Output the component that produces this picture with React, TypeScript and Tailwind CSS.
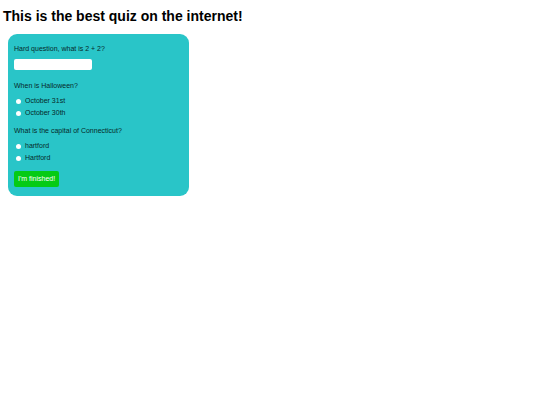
import { useState } from "react";

type ChoiceQuestion = {
  name: string;
  question: string;
  options: string[];
};

const choiceQuestions: ChoiceQuestion[] = [
  {
    name: "halloween",
    question: "When is Halloween?",
    options: ["October 31st", "October 30th"],
  },
  {
    name: "capital",
    question: "What is the capital of Connecticut?",
    options: ["hartford", "Hartford"],
  },
];

export default function App() {
  const [sum, setSum] = useState("");
  const [answers, setAnswers] = useState<Record<string, string>>({});

  return (
    <main className="min-h-screen bg-white font-['Liberation_Sans',Arial,sans-serif] text-black">
      <h1 className="px-[3px] pt-2 text-[14px] leading-4 font-bold">
        This is the best quiz on the internet!
      </h1>

      <form
        onSubmit={(e) => e.preventDefault()}
        className="mx-2 mt-2.5 max-w-[181px] rounded-[9px] bg-[#29c5c8] px-1.5 pt-[9px] pb-[9px] text-[7px] leading-3 text-[#06292a]"
      >
        <label htmlFor="sum" className="block">
          Hard question, what is 2 + 2?
        </label>
        <input
          id="sum"
          type="text"
          value={sum}
          onChange={(e) => setSum(e.target.value)}
          className="mt-1 mb-2.5 block h-[11px] w-[78px] rounded-xs bg-white px-1"
        />

        {choiceQuestions.map((q) => (
          <fieldset key={q.name} className="mb-1.5">
            <legend className="mb-[3px]">{q.question}</legend>
            {q.options.map((option) => (
              <label key={option} className="flex items-center gap-1 pl-0.5">
                <input
                  type="radio"
                  name={q.name}
                  value={option}
                  checked={answers[q.name] === option}
                  onChange={() => setAnswers({ ...answers, [q.name]: option })}
                  className="size-[5px] appearance-none rounded-full bg-white checked:bg-blue-600"
                />
                {option}
              </label>
            ))}
          </fieldset>
        ))}

        <button
          type="submit"
          className="mt-[7px] block h-4 rounded-xs bg-[#05cb14] px-1 text-white"
        >
          I'm finished!
        </button>
      </form>
    </main>
  );
}
